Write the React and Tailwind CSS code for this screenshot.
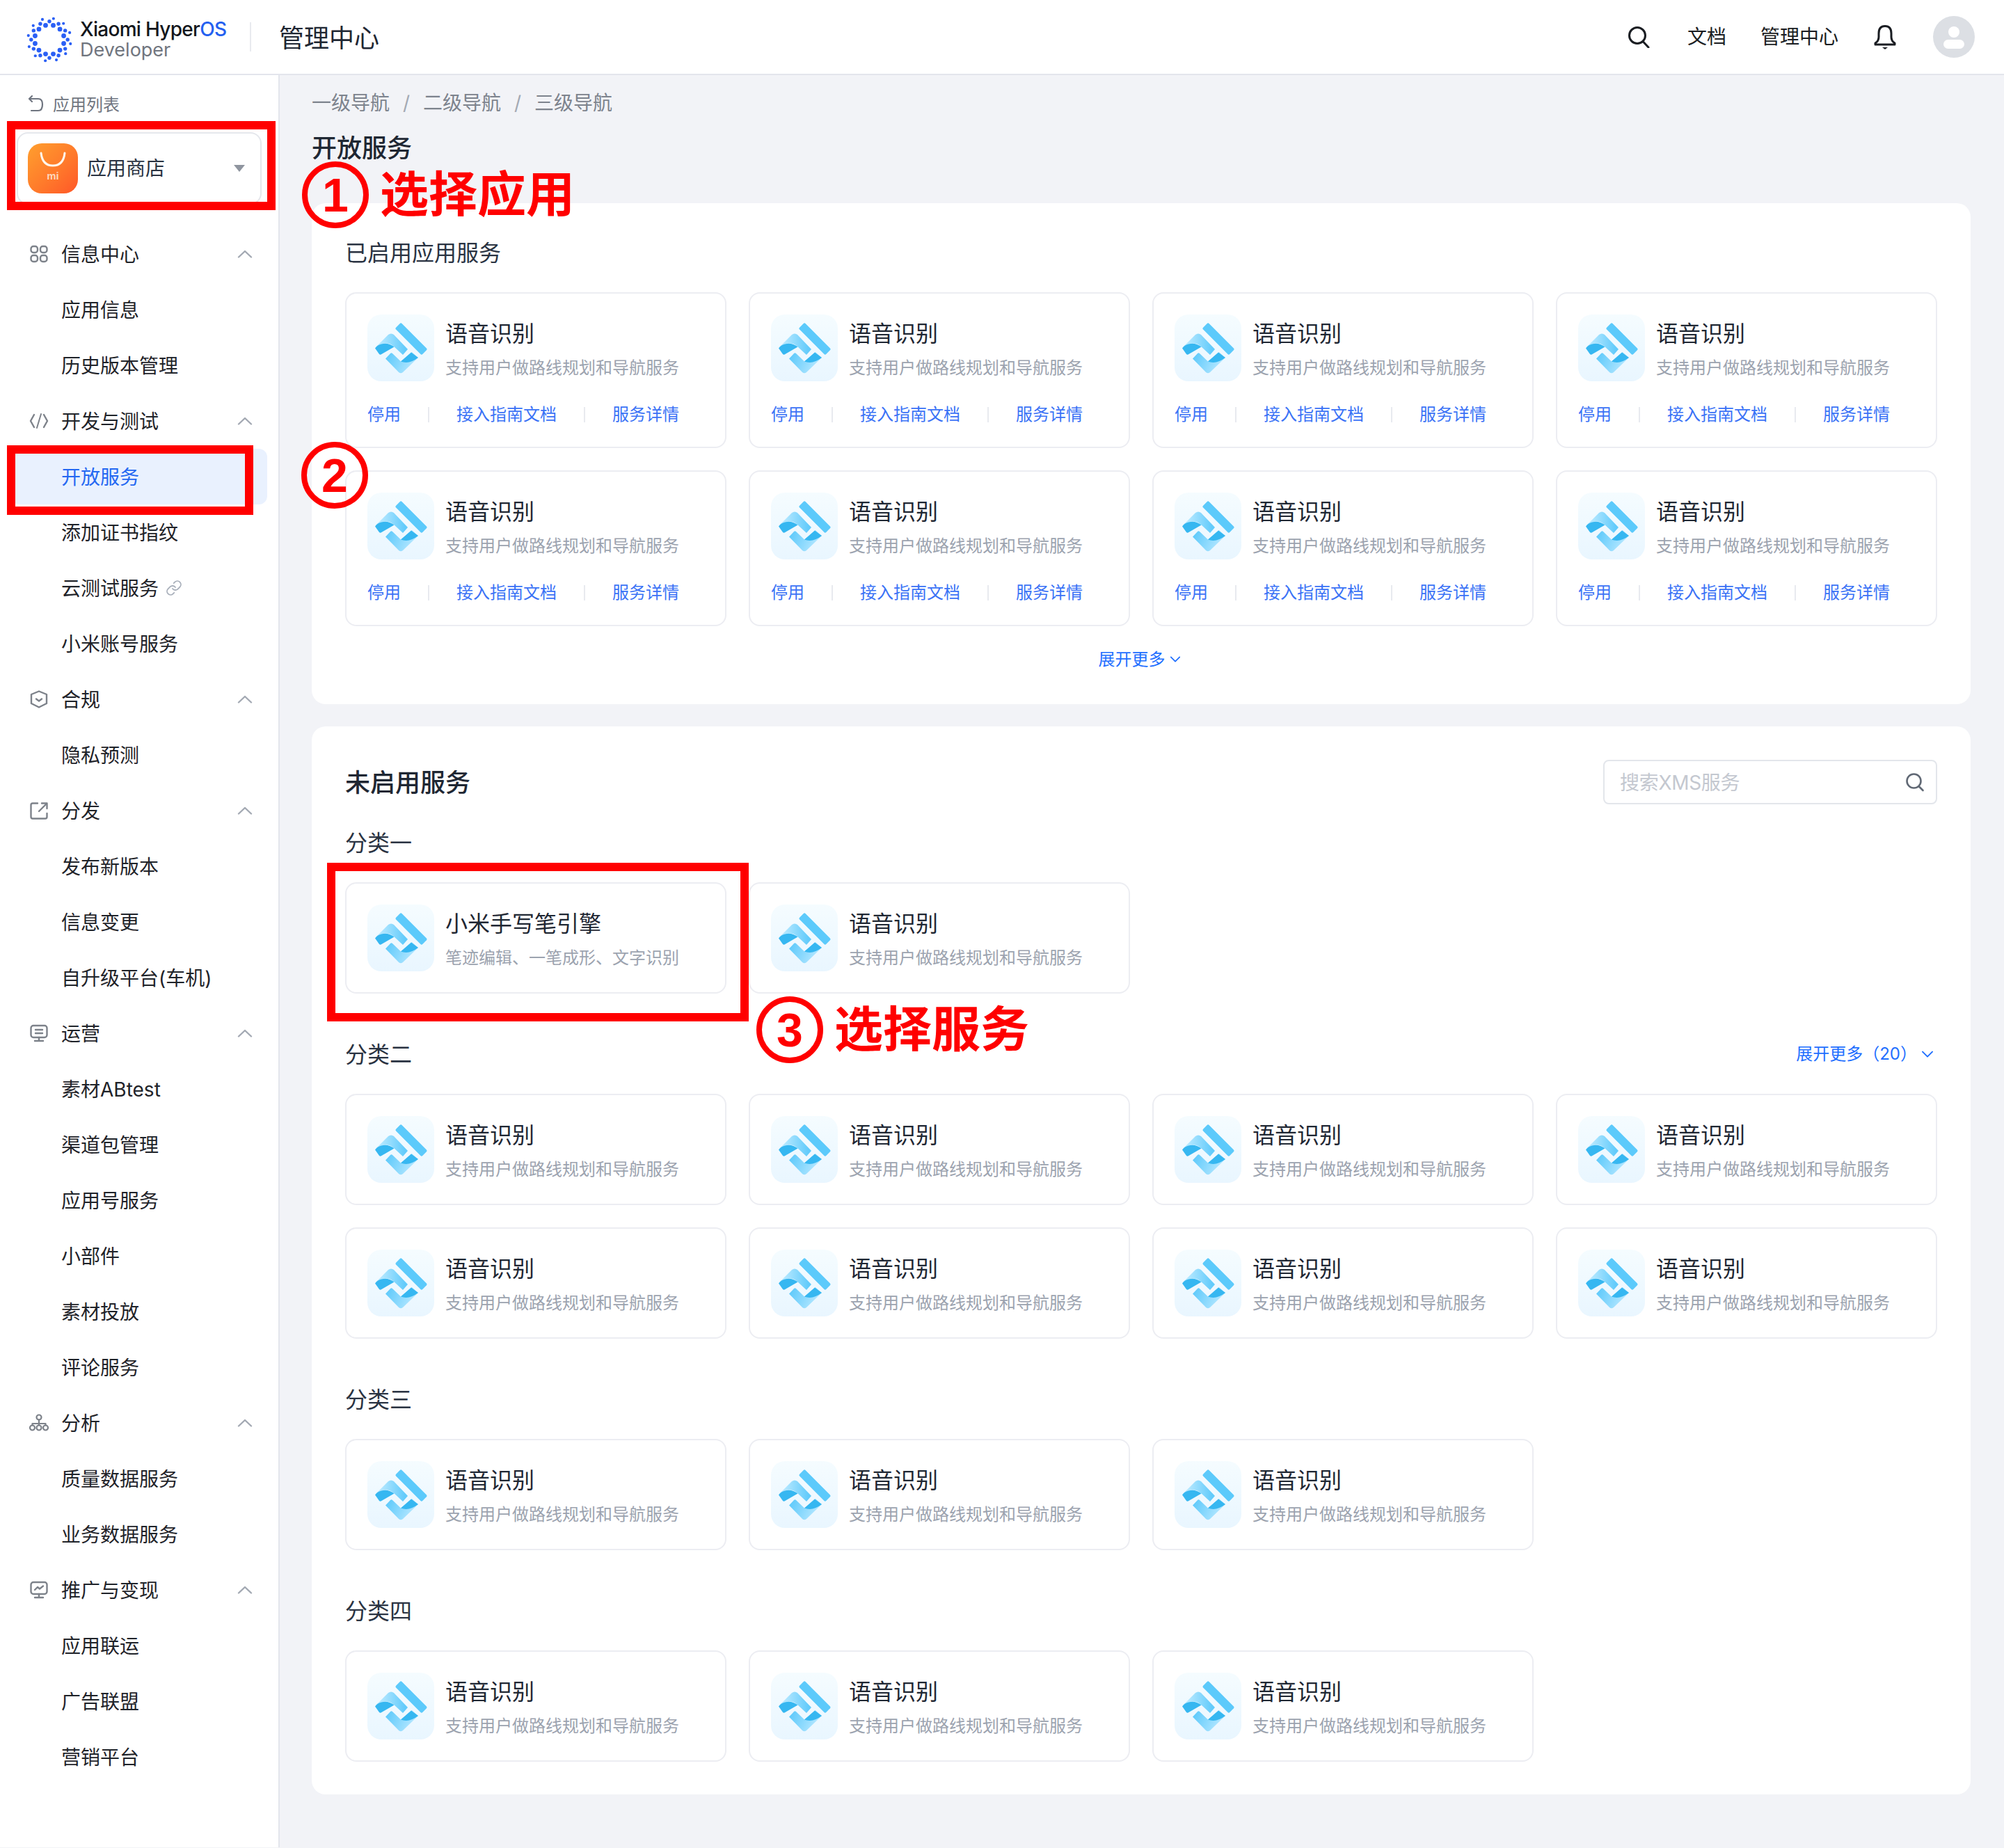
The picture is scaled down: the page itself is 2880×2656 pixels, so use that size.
import { Link } from "lucide-react";

const FONT = "font-['Inter','Noto_Sans_CJK_SC',sans-serif]";

const MENU = [
  { label: "信息中心", icon: "grid", children: ["应用信息", "历史版本管理"] },
  { label: "开发与测试", icon: "code", children: ["开放服务", "添加证书指纹", "云测试服务", "小米账号服务"] },
  { label: "合规", icon: "shield", children: ["隐私预测"] },
  { label: "分发", icon: "share", children: ["发布新版本", "信息变更", "自升级平台(车机)"] },
  { label: "运营", icon: "screen", children: ["素材ABtest", "渠道包管理", "应用号服务", "小部件", "素材投放", "评论服务"] },
  { label: "分析", icon: "tree", children: ["质量数据服务", "业务数据服务"] },
  { label: "推广与变现", icon: "chart", children: ["应用联运", "广告联盟", "营销平台"] },
];

// three rings of 12 dots, each ring slightly turned
const DOTS = [];
for (let i = 0; i < 12; i++) {
  const step = (i * Math.PI) / 6;
  const ring = (deg, dist, r) => {
    const a = step + (deg * Math.PI) / 180 - Math.PI / 2;
    DOTS.push({ x: 33 + Math.cos(a) * dist, y: 33 + Math.sin(a) * dist, r });
  };
  ring(15, 21.3, 3.4);
  ring(0, 26.2, 2.7);
  ring(11, 30.8, 2.1);
}

function Logo() {
  return (
    <svg width="66" height="66" viewBox="0 0 66 66" className="shrink-0 mt-[8px]">
      {DOTS.map((d, i) => (
        <circle key={i} cx={d.x} cy={d.y} r={d.r} fill="#2a5ff5" />
      ))}
    </svg>
  );
}

function MenuIcon({ name }) {
  const common = { width: 32, height: 32, viewBox: "0 0 32 32", fill: "none", stroke: "#7d828a", strokeWidth: 2.4, strokeLinecap: "round", strokeLinejoin: "round", className: "shrink-0" };
  if (name === "grid") {
    return (
      <svg {...common}>
        <rect x="4.5" y="5" width="9.5" height="9" rx="3.4" />
        <rect x="18" y="5" width="9.5" height="9" rx="3.4" />
        <rect x="4.5" y="18" width="9.5" height="9" rx="3.4" />
        <rect x="18" y="18" width="9.5" height="9" rx="3.4" />
      </svg>
    );
  }
  if (name === "code") {
    return (
      <svg {...common}>
        <path d="M9 7 L4 16 L9 25" />
        <path d="M23 7 L28 16 L23 25" />
        <path d="M19 6 L13 26" strokeWidth="2" />
      </svg>
    );
  }
  if (name === "shield") {
    return (
      <svg {...common}>
        <path d="M16 4.5 L27 9 V22 L16 27.5 L5 22 V9 Z" />
        <path d="M12 15.5 L16 18.5 L20 15.5" />
      </svg>
    );
  }
  if (name === "share") {
    return (
      <svg {...common}>
        <path d="M14 5.5 H7 Q4.5 5.5 4.5 8 V25 Q4.5 27.5 7 27.5 H25 Q27.5 27.5 27.5 25 V20" />
        <path d="M20 5.5 H27.5 V13" />
        <path d="M27 6 L16 17" />
      </svg>
    );
  }
  if (name === "screen") {
    return (
      <svg {...common}>
        <rect x="4.5" y="5" width="23" height="17" rx="3.5" />
        <path d="M11 11 H21 M11 16 H21 M16 22 V26 M10 27 H22" />
      </svg>
    );
  }
  if (name === "tree") {
    return (
      <svg {...common} strokeWidth="2.2">
        <circle cx="16" cy="8" r="3.5" />
        <circle cx="6.5" cy="23" r="3.5" />
        <circle cx="16" cy="23" r="3.5" />
        <circle cx="25.5" cy="23" r="3.5" />
        <path d="M16 11.5 V19.5 M6.5 19.5 V17 H25.5 V19.5" />
      </svg>
    );
  }
  return (
    <svg {...common}>
      <rect x="4.5" y="5" width="23" height="17" rx="3.5" />
      <path d="M10 16 L14 12 L17 14.5 L22 10.5 M16 22 V26 M10 27 H22" />
    </svg>
  );
}

function ChevronUp() {
  return (
    <svg width="22" height="12" viewBox="0 0 22 12" fill="none" stroke="#a3a9b3" strokeWidth="2.4" strokeLinecap="round" strokeLinejoin="round" className="shrink-0">
      <path d="M2 10.5 L11 2 L20 10.5" />
    </svg>
  );
}

function ChevronDown({ size = 16 }) {
  return (
    <svg width={size} height={size * 0.6} viewBox="0 0 16 10" fill="none" stroke="#1f6fff" strokeWidth="1.8" strokeLinecap="round" strokeLinejoin="round" className="shrink-0">
      <path d="M1.5 1.5 L8 8 L14.5 1.5" />
    </svg>
  );
}

function Sidebar() {
  return (
    <aside className="w-[402px] shrink-0 bg-white border-r-2 border-[#e3e5ec] pt-[16px]">
      <div className="h-[50px] pl-[40px] flex items-center gap-[12px] text-[24px] text-[#6f7580]">
        <svg width="24" height="26" viewBox="0 0 24 26" fill="none" stroke="#6f7580" strokeWidth="2.2" strokeLinecap="round" strokeLinejoin="round" className="shrink-0">
          <path d="M6 2 L2 6 L6 10" />
          <path d="M2.5 6 H15 Q21 6 21 14 Q21 23 15 23 H5" />
        </svg>
        <span className="pt-[3px]">应用列表</span>
      </div>
      <div className="ml-[24px] mt-[16px] w-[352px] h-[104px] border-2 border-[#e5e7ec] rounded-[16px] pl-[14px] pr-[22px] flex items-center">
        <div className="w-[72px] h-[72px] rounded-[20px] bg-gradient-to-br from-[#ff9f2e] to-[#ff5628] flex flex-col items-center shrink-0">
          <svg width="40" height="28" viewBox="0 0 40 28" fill="none" stroke="#fff6ea" strokeWidth="3" strokeLinecap="round" className="mt-[12px]">
            <path d="M3 2 Q5 20 20 20 Q35 20 37 2" />
          </svg>
          <span className="text-[15px] leading-[14px] font-bold text-[#fcd6bb] font-['Liberation_Sans',sans-serif]">mi</span>
        </div>
        <span className="ml-[13px] text-[28px] text-[#2a3342] flex-1">应用商店</span>
        <div className="w-0 h-0 border-l-[8px] border-r-[8px] border-t-[10px] border-l-transparent border-r-transparent border-t-[#8f959f]" />
      </div>
      <nav className="mt-[31px]">
        {MENU.map((m) => (
          <div key={m.label}>
            <div className="h-[80px] mx-[16px] pl-[24px] pr-[21px] flex items-center gap-[16px] text-[28px] text-[#1f2329]">
              <MenuIcon name={m.icon} />
              <span className="flex-1 pt-[2px]">{m.label}</span>
              <ChevronUp />
            </div>
            {m.children.map((c) => (
              <div
                key={c}
                className={`h-[80px] mx-[16px] pl-[72px] flex items-center gap-[10px] text-[28px] rounded-[12px] ${c === "开放服务" ? "bg-[#e9f1fe] text-[#2468f2]" : "text-[#1f2329]"}`}
              >
                <span className="pt-[2px]">{c}</span>
                {c === "云测试服务" && <Link size={24} color="#a8afba" strokeWidth={1.8} />}
              </div>
            ))}
          </div>
        ))}
      </nav>
    </aside>
  );
}

function ServiceIcon() {
  return (
    <div className="w-[96px] h-[96px] rounded-[20px] bg-gradient-to-b from-[#f5fcff] to-[#e9f6ff] shrink-0">
      <svg width="96" height="96" viewBox="0 0 96 96">
        <defs>
          <linearGradient id="svcBar" x1="42" y1="14" x2="84" y2="54" gradientUnits="userSpaceOnUse">
            <stop offset="0" stopColor="#5ccafb" />
            <stop offset="1" stopColor="#b0e5ff" />
          </linearGradient>
          <linearGradient id="svcLeft" x1="20" y1="44" x2="54" y2="44" gradientUnits="userSpaceOnUse">
            <stop offset="0" stopColor="#b3e7ff" />
            <stop offset="1" stopColor="#62cbfb" />
          </linearGradient>
          <linearGradient id="svcBottom" x1="28" y1="62" x2="62" y2="78" gradientUnits="userSpaceOnUse">
            <stop offset="0" stopColor="#62cbfb" />
            <stop offset="1" stopColor="#aee5ff" />
          </linearGradient>
        </defs>
        <rect x="-27" y="-6" width="54" height="12" rx="2" transform="translate(63 35) rotate(45)" fill="url(#svcBar)" />
        <path d="M12 47 L30 29 Q34 26 38 29 L58 50 L51 58 L38 46 Q30 39 20 43 Z" fill="url(#svcLeft)" />
        <path d="M11 48.5 Q14 44 20 42.5 Q30 40 38.5 46.5 L19.5 57.5 Q18 58 17 57 Z" fill="#36b7f1" />
        <path d="M26 63.5 L33 56 Q34.5 54.5 36 56 L48 67.5 L63 54.5 Q64 54 65 55 L73 62 L51 83 Q48 85.5 45 83 Z" fill="url(#svcBottom)" />
        <path d="M48 67.5 Q60 72 73 62 L63 54.5 Z" fill="#36b7f1" />
      </svg>
    </div>
  );
}

function ServiceCard({ title = "语音识别", desc = "支持用户做路线规划和导航服务", actions }) {
  return (
    <div className={`${actions ? "h-[224px]" : "h-[160px]"} bg-white border-2 border-[#ecedf2] rounded-[16px] pt-[30px] px-[30px]`}>
      <div className="flex gap-[16px]">
        <ServiceIcon />
        <div className="min-w-0">
          <p className="text-[32px] leading-[56px] text-[#1f2733]">{title}</p>
          <p className="text-[24px] leading-[40px] mt-[1px] text-[#9ca3af] whitespace-nowrap">{desc}</p>
        </div>
      </div>
      {actions && (
        <div className="mt-[31px] flex items-center gap-[39px] text-[24px] leading-[32px] text-[#3a72f6]">
          <span>停用</span>
          <span className="w-[2px] h-[22px] bg-[#e8eaef]" />
          <span>接入指南文档</span>
          <span className="w-[2px] h-[22px] bg-[#e8eaef]" />
          <span>服务详情</span>
        </div>
      )}
    </div>
  );
}

function Grid({ children }) {
  return <div className="grid grid-cols-4 gap-[32px]">{children}</div>;
}

function Group({ label, count, more }) {
  return (
    <div className="mt-[64px]">
      <div className="h-[44px] mb-[36px] flex items-center justify-between">
        <span className="pt-[3px] text-[32px] text-[#2a3342]">{label}</span>
        {more && (
          <span className="flex items-center gap-[6px] pr-[5px] pt-[2px] text-[24px] text-[#1f6fff]">
            展开更多（{more}）
            <ChevronDown size={18} />
          </span>
        )}
      </div>
      <Grid>
        {Array.from({ length: count }).map((_, i) => (
          <ServiceCard key={i} />
        ))}
      </Grid>
    </div>
  );
}

function Mark({ digit, className, text }) {
  return (
    <div className={`absolute flex items-center ${className}`}>
      <div className="w-[96px] h-[96px] rounded-full border-[8px] border-[#ff0000] flex items-center justify-center text-[#ff0000] text-[68px] leading-none font-bold font-['Liberation_Sans',sans-serif]">
        {digit}
      </div>
      {text && <span className="ml-[16px] text-[70px] leading-[96px] font-bold text-[#ff0000] whitespace-nowrap">{text}</span>}
    </div>
  );
}

export default function App() {
  return (
    <div className={`relative w-[2880px] min-h-[2656px] bg-[#f2f3f7] ${FONT}`}>
      <header className="h-[108px] bg-white border-b-2 border-[#e3e5ec] pl-[38px] pr-[42px] flex items-center">
        <Logo />
        <div className="ml-[11px] w-[220px] pt-[7px]">
          <p className="text-[28px] leading-[30px] font-medium tracking-[-0.7px] text-[#14171c] whitespace-nowrap">
            Xiaomi Hyper<span className="text-[#2460f0]">OS</span>
          </p>
          <p className="text-[27px] leading-[30px] text-[#70757e]">Developer</p>
        </div>
        <span className="w-[2px] h-[42px] bg-[#e8eaef] ml-[24px]" />
        <span className="ml-[40px] pt-[3px] text-[36px] text-[#1f2733]">管理中心</span>
        <div className="ml-auto flex items-center text-[28px] text-[#1a1d22]">
          <svg width="32" height="32" viewBox="0 0 32 32" fill="none" stroke="#1a1d22" strokeWidth="3" strokeLinecap="round">
            <circle cx="14" cy="14" r="11.5" />
            <path d="M22.5 23 L30 31" />
          </svg>
          <span className="ml-[54px]">文档</span>
          <span className="ml-[49px]">管理中心</span>
          <svg width="34" height="36" viewBox="0 0 34 36" fill="none" stroke="#1a1d22" strokeWidth="3" strokeLinejoin="round" className="ml-[50px]">
            <path d="M3 27 Q8 24 8 18 V13 Q8 2.5 17 2.5 Q26 2.5 26 13 V18 Q26 24 31 27 V29 H3 Z" />
            <path d="M13 33 H21 L17 36 Z" fill="#1a1d22" stroke="none" />
          </svg>
          <svg width="60" height="60" viewBox="0 0 60 60" className="ml-[52px]">
            <circle cx="30" cy="30" r="30" fill="#dcdfe4" />
            <circle cx="30" cy="23" r="8" fill="#fff" />
            <rect x="15" y="34" width="30" height="13" rx="6.5" fill="#fff" />
          </svg>
        </div>
      </header>

      <div className="flex">
        <Sidebar />
        <main className="flex-1 pl-[46px] pr-[48px] pb-[76px]">
          <div className="mt-[15px] h-[48px] pt-[2px] flex items-center text-[28px] text-[#7d838d]">
            <span>一级导航</span>
            <span className="w-[48px] text-center text-[#a3a9b3]">/</span>
            <span>二级导航</span>
            <span className="w-[48px] text-center text-[#a3a9b3]">/</span>
            <span>三级导航</span>
          </div>
          <h1 className="mt-[18px] h-[48px] leading-[48px] text-[36px] font-medium text-[#1f2733]">开放服务</h1>

          <section className="mt-[55px] bg-white rounded-[20px] pt-[48px] pb-[44px] px-[48px]">
            <h2 className="h-[47px] leading-[48px] text-[32px] text-[#2a3342]">已启用应用服务</h2>
            <div className="mt-[33px]">
              <Grid>
                {Array.from({ length: 8 }).map((_, i) => (
                  <ServiceCard key={i} actions />
                ))}
              </Grid>
            </div>
            <div className="mt-[28px] h-[40px] pr-[5px] flex items-center justify-center gap-[6px] text-[24px] text-[#1f6fff]">
              展开更多
              <ChevronDown />
            </div>
          </section>

          <section className="mt-[32px] bg-white rounded-[20px] pt-[48px] pb-[47px] px-[48px]">
            <div className="flex items-center justify-between">
              <h2 className="pt-[2px] text-[36px] font-medium text-[#1f2733]">未启用服务</h2>
              <div className="w-[480px] h-[64px] border-2 border-[#e3e6eb] rounded-[8px] pl-[22px] pr-[16px] flex items-center">
                <input
                  placeholder="搜索XMS服务"
                  className="flex-1 min-w-0 pt-[2px] text-[28px] tracking-[-0.3px] outline-none placeholder:text-[#c4c8d0]"
                />
                <svg width="28" height="28" viewBox="0 0 28 28" fill="none" stroke="#616975" strokeWidth="2.6" strokeLinecap="round">
                  <circle cx="12.5" cy="12.5" r="10" />
                  <path d="M20 20.5 L25.5 26" />
                </svg>
              </div>
            </div>

            <div className="mt-[32px]">
              <div className="h-[44px] mb-[36px] flex items-center">
                <span className="pt-[3px] text-[32px] text-[#2a3342]">分类一</span>
              </div>
              <Grid>
                <ServiceCard title="小米手写笔引擎" desc="笔迹编辑、一笔成形、文字识别" />
                <ServiceCard />
              </Grid>
            </div>
            <Group label="分类二" count={8} more="20" />
            <Group label="分类三" count={3} />
            <Group label="分类四" count={3} />
          </section>
        </main>
      </div>

      {/* 标注 */}
      <div className="absolute left-[10px] top-[174px] w-[386px] h-[128px] border-[12px] border-[#ff0000]" />
      <div className="absolute left-[10px] top-[640px] w-[354px] h-[100px] border-[12px] border-[#ff0000]" />
      <div className="absolute left-[470px] top-[1240px] w-[606px] h-[228px] border-[12px] border-[#ff0000]" />
      <Mark digit="1" text="选择应用" className="left-[434px] top-[232px]" />
      <Mark digit="2" className="left-[433px] top-[635px]" />
      <Mark digit="3" text="选择服务" className="left-[1087px] top-[1432px]" />
    </div>
  );
}
